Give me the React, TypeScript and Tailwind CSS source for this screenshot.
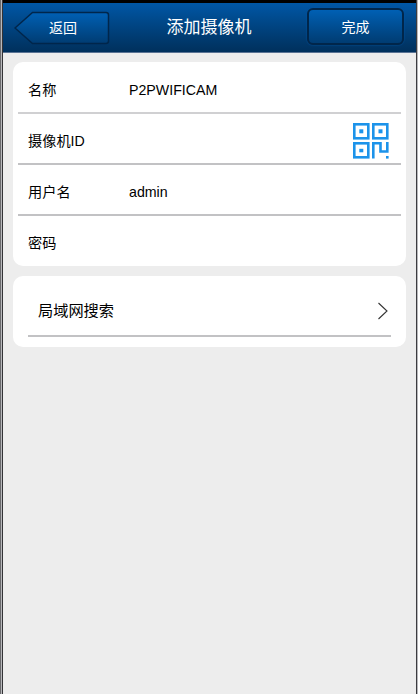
import React from "react";

interface Field {
  label: string;
  value: string;
  scan?: boolean;
}

const fields: Field[] = [
  { label: "名称", value: "P2PWIFICAM" },
  { label: "摄像机ID", value: "", scan: true },
  { label: "用户名", value: "admin" },
  { label: "密码", value: "" },
];

// Row heights and dividers, top to bottom
const rowStyles = [
  "h-[52px] pt-[5px] border-b-2 border-[#d0d0d2]",
  "h-[51px] pt-[4px] border-b-2 border-[#c2c2c4]",
  "h-[51px] pt-[5px] border-b-2 border-[#c2c2c4]",
  "h-[50px] pt-[4px]",
];

const QrIcon: React.FC = () => (
  <svg className="w-[36px] h-[36px]" viewBox="0 0 36 36" fill="none" stroke="#1c93ea" strokeWidth="2.600">
    <rect x="1.300" y="1.300" width="14" height="14" />
    <rect x="20.300" y="1.300" width="14" height="14" />
    <rect x="1.300" y="20.300" width="14" height="14" />
    <path d="M20.300 35.600V20.300H27.500V28.500H34.300V19" />
    <g fill="#1c93ea" stroke="none">
      <rect x="6.300" y="6.300" width="4" height="4" />
      <rect x="25.500" y="6.300" width="4" height="4" />
      <rect x="6.300" y="25.800" width="4" height="3.500" />
      <rect x="33" y="33" width="2.600" height="2.600" />
    </g>
  </svg>
);

const Header: React.FC = () => (
  <header className="h-[50px] shrink-0 flex justify-between bg-gradient-to-b from-[#0057a6] to-[#00305c] border-b border-[#5a7394] text-white">
    <button className="relative mt-[8px] ml-[11px] w-[96px] h-[34px] text-[14px] leading-[31px] pl-[2px]">
      <svg className="absolute inset-0" width="96" height="34" viewBox="0 0 96 34">
        <defs>
          <linearGradient id="back" x1="0" y1="0" x2="0" y2="1">
            <stop offset="0" stopColor="#0060b4" />
            <stop offset="1" stopColor="#003c72" />
          </linearGradient>
        </defs>
        <path
          d="M1 17L18.500 1.500H92Q94.500 1.500 94.500 4V30Q94.500 32.500 92 32.500H18.500Z"
          fill="url(#back)"
          stroke="#00264b"
          strokeWidth="1.500"
        />
      </svg>
      <span className="relative">返回</span>
    </button>
    <h1 className="text-[17px] leading-[50px] -mr-px">添加摄像机</h1>
    <button className="mt-[5px] mr-[12px] w-[97px] h-[37px] rounded-[6px] border-2 border-[#00264b] bg-gradient-to-b from-[#0060b4] to-[#003c72] text-[14px] leading-[34px] shadow-[0_0_2px_#0057a6]">
      完成
    </button>
  </header>
);

const App: React.FC = () => {
  return (
    <div className="w-[418px] h-[694px] flex overflow-hidden font-['Liberation_Sans','Noto_Sans_CJK_SC',sans-serif] text-black">
      <div className="w-[3px] bg-[#b8b8bb] border-l border-l-[#69696c] border-r border-r-[#333336]" />
      <main className="w-[413px] flex flex-col bg-[#ededed] border-t-[3px] border-black">
        <Header />

        <section className="mt-[9px] mx-[10px] h-[204px] rounded-[10px] bg-white px-[5px]">
          {fields.map((field, i) => (
            <div
              key={field.label}
              className={`flex items-center pl-[10px] text-[14.2px] leading-[20px] ${rowStyles[i]}`}
            >
              <span className="w-[101px]">{field.label}</span>
              <span className="flex-1">{field.value}</span>
              {field.scan && (
                <span className="mr-[12px]">
                  <QrIcon />
                </span>
              )}
            </div>
          ))}
        </section>

        <section className="mt-[10px] mx-[10px] h-[71px] rounded-[10px] bg-white px-[15px]">
          <div className="h-[61px] flex items-center justify-between pl-[10px] pr-[3px] pt-[10px] border-b-2 border-[#c2c2c4]">
            <span className="text-[15.2px] leading-[20px]">局域网搜索</span>
            <svg className="w-[10px] h-[18px]" viewBox="0 0 10 18" fill="none" stroke="#333" strokeWidth="1.100">
              <path d="M0.500 1L9 9L0.500 17" />
            </svg>
          </div>
        </section>
      </main>
      <div className="w-[2px] bg-[#b8b8bb] border-l border-[#3c3c40]" />
    </div>
  );
};

export default App;
